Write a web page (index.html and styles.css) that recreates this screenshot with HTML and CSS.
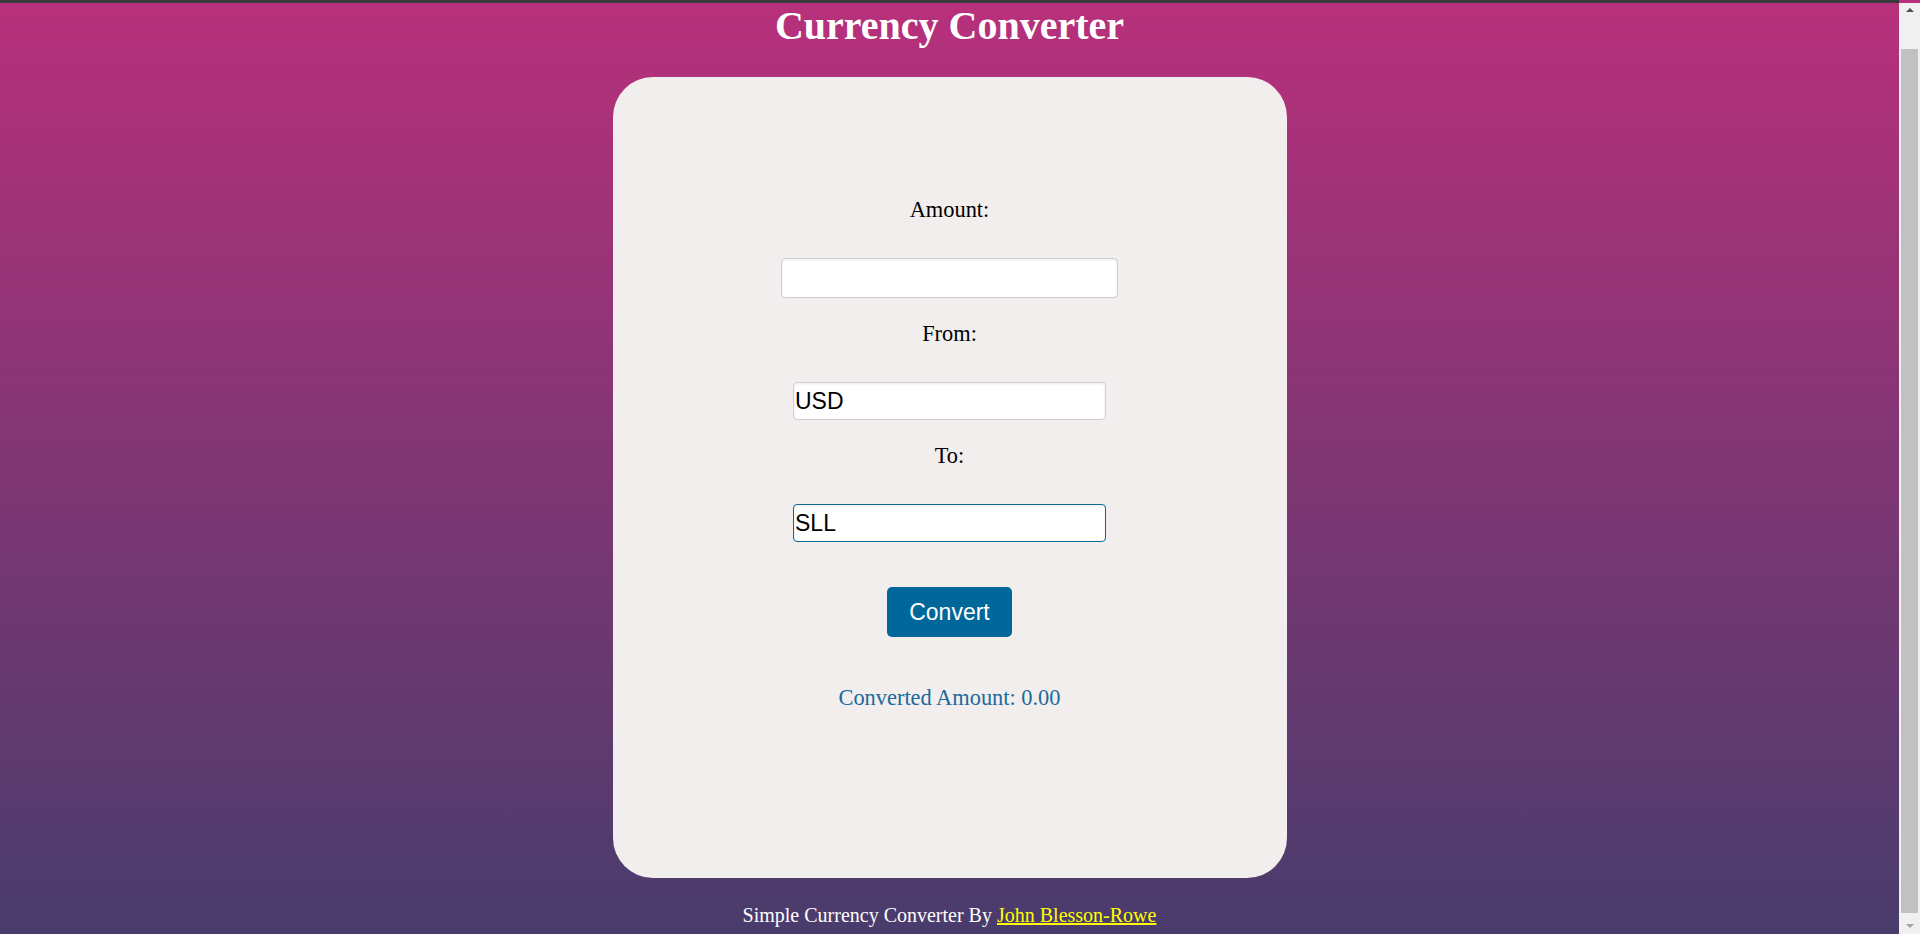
FILE: index.html
```html
<!DOCTYPE html>
<html lang="en">
<head>
<meta charset="utf-8">
<title>Currency Converter</title>
<link rel="stylesheet" href="styles.css">
</head>
<body>
  <h1 class="title">Currency Converter</h1>
  <main class="card">
    <label class="label" for="amount">Amount:</label>
    <input class="field field-amount" id="amount" type="text" value="">
    <label class="label" for="from">From:</label>
    <input class="field field-currency" id="from" type="text" value="USD">
    <label class="label" for="to">To:</label>
    <input class="field field-currency field-focus" id="to" type="text" value="SLL">
    <button class="convert" type="button">Convert</button>
    <p class="result">Converted Amount: 0.00</p>
  </main>
  <footer class="footer">Simple Currency Converter By <a class="footer-link" href="#">John Blesson-Rowe</a></footer>
  <div class="scrollbar" aria-hidden="true">
    <div class="sb-button"><span class="sb-arrow-up"></span></div>
    <div class="sb-track">
      <div class="sb-thumb"></div>
    </div>
    <div class="sb-button"><span class="sb-arrow-down"></span></div>
  </div>
</body>
</html>
```

FILE: styles.css
```css
html {
  background: linear-gradient(to bottom, #b8307b 0%, #483c6c 100%) fixed;
  background-color: #483c6c;
  overflow: hidden;
}

body {
  margin: 0 21px 0 0;
  border-top: 3px solid #3b3b3b;
  font-family: "Liberation Serif", "Times New Roman", serif;
  display: flex;
  flex-direction: column;
  align-items: center;
}

.title {
  margin: 0;
  font-size: 40px;
  line-height: 46px;
  font-weight: bold;
  color: #ffffff;
  text-align: center;
}

.card {
  box-sizing: border-box;
  margin-top: 28px;
  width: 674px;
  height: 801px;
  padding-top: 120px;
  background: #f2eeed;
  border-radius: 40px;
  display: flex;
  flex-direction: column;
  align-items: center;
}

.label {
  display: block;
  font-size: 22.4px;
  line-height: 26px;
  color: #000000;
  margin-bottom: 35px;
}

.field {
  box-sizing: border-box;
  display: block;
  margin: 0 0 23px 0;
  border: 1px solid #cfcfcf;
  border-radius: 4px;
  background: #ffffff;
  box-shadow: inset 0 1px 3px rgba(0, 0, 0, 0.08);
  padding: 0 0 0 1px;
  font-family: "Liberation Sans", Arial, sans-serif;
  font-size: 23px;
  color: #000000;
  outline: none;
}

.field-amount {
  width: 337px;
  height: 40px;
}

.field-currency {
  width: 313px;
  height: 38px;
}

.field-focus {
  border-color: #0e6796;
  margin-bottom: 45px;
}

.convert {
  box-sizing: border-box;
  width: 125px;
  height: 50px;
  border: none;
  border-radius: 5px;
  background: #00679b;
  color: #ffffff;
  font-family: "Liberation Sans", Arial, sans-serif;
  font-size: 23px;
  padding: 0;
  margin: 0;
}

.result {
  margin: 48px 0 0 0;
  font-size: 22.4px;
  line-height: 26px;
  color: #1b6a9c;
}

.footer {
  margin-top: 26px;
  font-size: 20px;
  line-height: 23px;
  color: #ffffff;
  text-align: center;
}

.footer-link {
  color: #ffff00;
  text-decoration: underline;
}

/* fake window scrollbar overlaying the right edge */
.scrollbar {
  position: fixed;
  top: 3px;
  right: 0;
  bottom: 0;
  width: 21px;
  background: #f0f0f0;
  display: flex;
  flex-direction: column;
}

.sb-button {
  height: 14px;
  flex: none;
  display: flex;
  align-items: center;
  justify-content: center;
}

.sb-button:last-child {
  height: 17px;
}

.sb-arrow-up {
  width: 0;
  height: 0;
  border-left: 4px solid transparent;
  border-right: 4px solid transparent;
  border-bottom: 4px solid #505050;
}

.sb-arrow-down {
  width: 0;
  height: 0;
  border-left: 4px solid transparent;
  border-right: 4px solid transparent;
  border-top: 4px solid #a3a3a3;
}

.sb-track {
  flex: 1;
  padding: 32px 2px 4px 2px;
  display: flex;
}

.sb-thumb {
  flex: 1;
  background: #c1c1c1;
}
```
